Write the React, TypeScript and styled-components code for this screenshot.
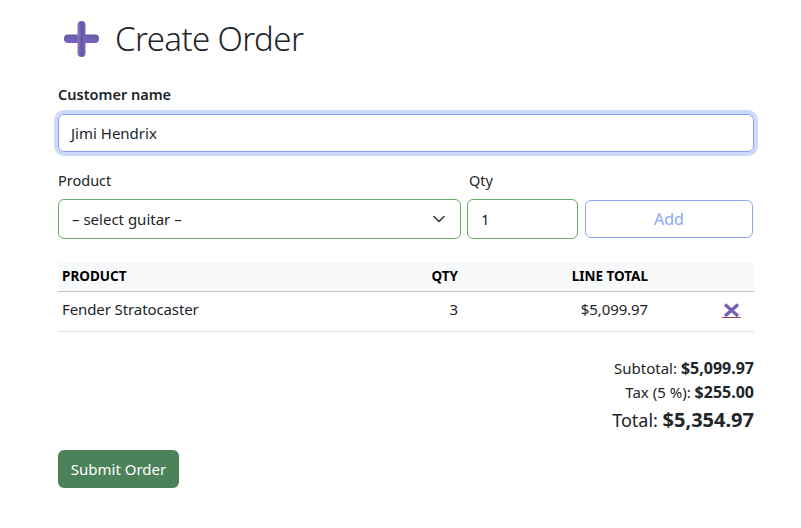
import React from "react";
import styled, { createGlobalStyle } from "styled-components";

const Global = createGlobalStyle`
  html, body { margin: 0; padding: 0; background: #fff; }
  body { font-family: "Noto Sans", "Open Sans", sans-serif; font-size: 15px; color: #212529; }
  * { box-sizing: border-box; }
`;

const Page = styled.div`
  width: 696px;
  margin-left: 58px;
  padding-top: 13px;
`;
const Title = styled.h1`
  display: flex;
  align-items: center;
  gap: 16px;
  margin: 0 0 19px 6px;
  height: 52px;
  font-size: 33px;
  letter-spacing: -0.6px;
  font-weight: 300;
  line-height: 52px;
  color: #212529;
`;
const Label = styled.label<{ $bold?: boolean }>`
  display: block;
  font-size: 14.5px;
  line-height: 20px;
  font-weight: ${(p) => (p.$bold ? 600 : 400)};
  margin-bottom: 10px;
`;
const NameInput = styled.div`
  height: 38px;
  border: 1px solid #86a0f0;
  border-radius: 6px;
  box-shadow: 0 0 0 4px #cdd9fb;
  padding: 0 12px;
  display: flex;
  align-items: center;
  font-size: 15px;
  margin-bottom: 18px;
`;
const AddGrid = styled.div`
  display: grid;
  grid-template-columns: 403px 111px 1fr;
  column-gap: 6px;
  align-items: center;
  margin-bottom: 23px;
`;
const GridLabel = styled(Label)<{ $inset?: boolean }>`
  margin-bottom: 9px;
  padding-left: ${(p) => (p.$inset ? "2px" : "0")};
`;
const Field = styled.div`
  height: 40px;
  border: 1px solid #68ad6a;
  border-radius: 6px;
  padding: 0 13px;
  display: flex;
  align-items: center;
  justify-content: space-between;
  font-size: 15px;
  color: #212529;
`;
const AddButton = styled.div`
  height: 38px;
  margin: 0 1px;
  border: 1px solid #8ea6f5;
  border-radius: 6px;
  color: #8ea6f5;
  font-size: 16px;
  display: flex;
  align-items: center;
  justify-content: center;
`;
const Table = styled.table`
  width: 696px;
  border-collapse: collapse;
  table-layout: fixed;
  margin-bottom: 24px;
`;
const Th = styled.th<{ $w: number; $right?: boolean }>`
  width: ${(p) => p.$w}px;
  height: 29px;
  padding: 0 4px;
  background: #f8f9fa;
  border-bottom: 1px solid #c6c7c8;
  text-align: ${(p) => (p.$right ? "right" : "left")};
  font-size: 13.5px;
  font-weight: 700;
  color: #000;
`;
const Td = styled.td<{ $right?: boolean }>`
  height: 40px;
  padding: 0 4px 5px;
  border-bottom: 1px solid #dee2e6;
  text-align: ${(p) => (p.$right ? "right" : "left")};
  font-size: 15px;
  letter-spacing: -0.1px;
`;
const IconCell = styled(Td)`
  padding: 0;
  text-align: left;
`;
const RemoveIcon = styled.svg`
  display: block;
  margin-left: 70px;
`;
const Totals = styled.div`
  text-align: right;
  margin-bottom: 14px;
`;
const TotalLine = styled.div<{ $big?: boolean }>`
  font-size: ${(p) => (p.$big ? "18px" : "15px")};
  line-height: ${(p) => (p.$big ? "32px" : "24px")};
  b { font-weight: 700; font-size: ${(p) => (p.$big ? "20px" : "16px")}; }
`;
const Submit = styled.div`
  display: inline-flex;
  align-items: center;
  justify-content: center;
  width: 121px;
  height: 38px;
  border-radius: 6px;
  background: #4c8259;
  color: #fff;
  font-size: 15px;
`;
const PlusIcon = styled.svg`
  margin-top: -1px;
`;

export default function App() {
  return (
    <Page>
      <Global />
      <Title>
        <PlusIcon width="35" height="36" viewBox="0 0 35 36">
          <defs>
            <linearGradient id="v" x1="0" x2="1" y1="0" y2="0">
              <stop offset="0" stopColor="#8c7cc8" />
              <stop offset="0.5" stopColor="#62589c" />
              <stop offset="1" stopColor="#7f62c8" />
            </linearGradient>
            <linearGradient id="h" x1="0" x2="0" y1="0" y2="1">
              <stop offset="0" stopColor="#655c9e" />
              <stop offset="0.6" stopColor="#6f62b4" />
              <stop offset="1" stopColor="#7f5ccc" />
            </linearGradient>
          </defs>
          <rect x="0" y="13.5" width="35" height="8.5" rx="4" fill="url(#h)" />
          <rect x="13.5" y="0" width="8" height="36" rx="4" fill="url(#v)" />
        </PlusIcon>
        Create Order
      </Title>
      <Label $bold>Customer name</Label>
      <NameInput>Jimi Hendrix</NameInput>
      <AddGrid>
        <GridLabel>Product</GridLabel>
        <GridLabel $inset>Qty</GridLabel>
        <span />
        <Field>
          – select guitar –
          <svg width="16" height="16" viewBox="0 0 16 16" fill="none" stroke="#343a40" strokeWidth="1.6" strokeLinecap="round" strokeLinejoin="round">
            <path d="M3 5.5l5 5 5-5" />
          </svg>
        </Field>
        <Field>1</Field>
        <AddButton>Add</AddButton>
      </AddGrid>
      <Table>
        <thead>
          <tr>
            <Th $w={304}>PRODUCT</Th>
            <Th $w={100} $right>QTY</Th>
            <Th $w={190} $right>LINE TOTAL</Th>
            <Th $w={102} />
          </tr>
        </thead>
        <tbody>
          <tr>
            <Td>Fender Stratocaster</Td>
            <Td $right>3</Td>
            <Td $right>$5,099.97</Td>
            <IconCell>
              <RemoveIcon width="19" height="16" viewBox="0 0 19 16">
                <path d="M3 1.5l13 11.5M16 1.5L3 13" stroke="#7560b4" strokeWidth="3.4" fill="none" />
                <path d="M0 14.5h19" stroke="#a0445c" strokeWidth="1" />
              </RemoveIcon>
            </IconCell>
          </tr>
        </tbody>
      </Table>
      <Totals>
        <TotalLine>Subtotal: <b>$5,099.97</b></TotalLine>
        <TotalLine>Tax (5 %): <b>$255.00</b></TotalLine>
        <TotalLine $big>Total: <b>$5,354.97</b></TotalLine>
      </Totals>
      <Submit>Submit Order</Submit>
    </Page>
  );
}
